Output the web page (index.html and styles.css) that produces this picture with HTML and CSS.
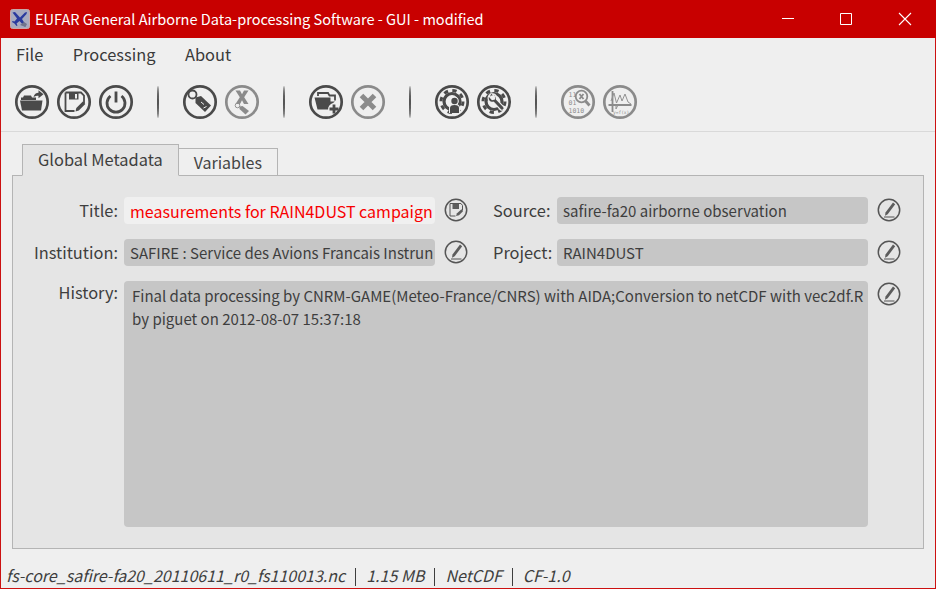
FILE: index.html
```html
<!DOCTYPE html>
<html lang="en">
<head>
<meta charset="utf-8">
<title>EUFAR General Airborne Data-processing Software - GUI - modified</title>
<link rel="stylesheet" href="styles.css">
</head>
<body>
<svg class="defs" width="0" height="0" aria-hidden="true">
  <defs>
    <symbol id="i-open" viewBox="0 0 36 36">
      <circle cx="18" cy="18" r="15.700" class="ring"/>
      <path class="fill" d="M7 13.500h2l1-2h7l1 2h4v2.500H7z"/>
      <path class="fill" d="M6 16.500h22.500l-1.500 10h-19z"/>
      <path class="fill" d="M19.500 13c.5-2.800 2.800-4.300 5-4.300V6.200l5 4-5 4v-2.500c-1.800 0-3.500.4-5 1.300z"/>
    </symbol>
    <symbol id="i-save" viewBox="0 0 36 36">
      <circle cx="18" cy="18" r="15.700" class="ring"/>
      <path class="line" d="M9.500 8.500h15.500l3 3v8M9.500 8.500v18.500h9"/>
      <path class="fill" d="M13 9h9.500v6.500H13z"/>
      <path class="cut" d="M19 10h2v4.500h-2z"/>
      <path class="fill" d="M19.500 27.500l.8-3.500 6.500-6.500 2.500 2.500-6.500 6.500z"/>
    </symbol>
    <symbol id="i-power" viewBox="0 0 36 36">
      <circle cx="18" cy="18" r="15.700" class="ring"/>
      <path class="thick" d="M12.500 12a9 9 0 1 0 11 0"/>
      <path class="thick" d="M18 7.500v11"/>
    </symbol>
    <symbol id="i-tag" viewBox="0 0 36 36">
      <circle cx="18" cy="18" r="15.700" class="ring"/>
      <circle cx="10.500" cy="10.500" r="4" class="line"/>
      <path class="fill" d="M13.500 13.500l5.500-1.500 10 9.500-6 6.500-9.500-9z"/>
      <path class="cut-line" d="M19 18l3 2.500M21.500 24l3-1.500"/>
    </symbol>
    <symbol id="i-untag" viewBox="0 0 36 36">
      <circle cx="18" cy="18" r="15.700" class="ring"/>
      <path class="fill" d="M11.500 6.500h4.500l2 3.800 2-3.800h4.500l-4.300 6.700 4.300 6.800H20l-2-3.800-2 3.800h-4.500l4.300-6.800z"/>
      <circle cx="13.500" cy="21.500" r="2.300" class="thin"/>
      <path class="fill" d="M15.500 22.500l3-.5 6.500 5-3.500 3.500-6-5.500z"/>
    </symbol>
    <symbol id="i-add" viewBox="0 0 36 36">
      <circle cx="18" cy="18" r="15.700" class="ring"/>
      <path class="line" d="M10 12V9h10l1.500 2.500h5.500v5"/>
      <path class="fill" d="M6.500 13.500h16v4H27l-2 1.500c-3 1-5 3.500-5 6.500H9.500z"/>
      <path class="thick" d="M26 20.500v9M21.500 25h9"/>
    </symbol>
    <symbol id="i-cancel" viewBox="0 0 36 36">
      <circle cx="18" cy="18" r="15.700" class="ring"/>
      <path class="heavy" d="M11.500 11.500l13 13M24.500 11.500l-13 13"/>
    </symbol>
    <symbol id="i-gear-user" viewBox="0 0 36 36">
      <circle cx="18" cy="18" r="15.700" class="ring"/>
      <circle cx="18" cy="17.500" r="8" class="gear-body"/>
      <circle cx="18" cy="17.500" r="11" class="gear-teeth"/>
      <path class="halo" d="M15 29v-5c0-2.500 2-3.500 2.800-3.700a4.300 4.300 0 1 1 5.400 0c.8.200 2.800 1.200 2.800 3.700v5z"/>
      <circle cx="20.500" cy="17" r="3.200" class="fill"/>
      <path class="fill" d="M16 29v-5c0-2 1.500-3 4.500-3s4.500 1 4.500 3v5z"/>
    </symbol>
    <symbol id="i-gear-tool" viewBox="0 0 36 36">
      <circle cx="18" cy="18" r="15.700" class="ring"/>
      <circle cx="18" cy="17.500" r="8" class="gear-body"/>
      <circle cx="18" cy="17.500" r="11" class="gear-teeth"/>
      <path class="tool" d="M14.500 10a4.800 4.800 0 0 0-1.500 7c1.200 1.400 3 1.700 4.500 1.200l6.800 7.300c.8.900 2.400 1 3.200.2.800-.8.800-2.300 0-3.100l-7-7.200c.4-1.700 0-3.400-1.300-4.600-1-.9-2-1.200-3-1l2.800 2.900-.5 2.300-2.300.5-2.800-2.900z"/>
    </symbol>
    <symbol id="i-bin" viewBox="0 0 36 36">
      <circle cx="18" cy="18" r="15.700" class="ring"/>
      <text x="8.500" y="13" class="bin">11</text>
      <text x="8.500" y="21" class="bin">01</text>
      <text x="8.500" y="29" class="bin">1010</text>
      <circle cx="21.500" cy="12.500" r="5.800" class="line"/>
      <path class="thick" d="M25.500 17l4 4.500"/>
      <path class="line" d="M19.500 10l4 5M23.500 10l-4 5"/>
    </symbol>
    <symbol id="i-plot" viewBox="0 0 36 36">
      <circle cx="18" cy="18" r="15.700" class="ring"/>
      <path class="line" d="M10.500 7v21M6.500 21h23"/>
      <path class="thin" d="M9 17l3-8 2.500 10 3.500-8 2 6 3-7 3 8 3 2M14 21v4l2-4"/>
      <text x="11" y="30" class="bin small">y=f(x)</text>
    </symbol>
    <symbol id="i-edit" viewBox="0 0 24 24">
      <circle cx="12" cy="12" r="10.700" class="ring-small"/>
      <path class="pen" d="M8.500 14.500l7.500-10 2.200 1.700-7.500 10-2.700 1.500z"/>
      <path class="thin" d="M7 19h10.500"/>
    </symbol>
    <symbol id="i-save-small" viewBox="0 0 24 24">
      <circle cx="12" cy="12" r="10.700" class="ring-small"/>
      <path class="thin" d="M6 5.500h11l1.500 2v5M6 5.500v12.500h5.500"/>
      <path class="pen" d="M8.500 6h6.500v5H8.500z"/>
      <path class="pen" d="M12 18l1-2.800 4.500-4 1.500 2-4 4z"/>
    </symbol>
  </defs>
</svg>

<div class="window">
  <header class="titlebar">
    <svg class="appicon" viewBox="0 0 20 20" aria-hidden="true">
      <rect x=".5" y=".5" width="19" height="19" rx="2" fill="#a8abc0" stroke="#c9a8a8"/>
      <path d="M2.500 3.500l2.500-.5 5 5.500 5-5 2-.5-.5 2-4.500 5 4 6.500-1.500 1-5-5.500-3 2.500 1 2-1 .5-2-2.500-2.500-1.500.5-1 2 .5 2.500-3z" fill="#2a3a9e"/>
      <path d="M10 16l4-3 3 2-1.500 3z" fill="#70748c"/>
    </svg>
    <span class="titletext">EUFAR General Airborne Data-processing Software - GUI - modified</span>
    <div class="winbtns">
      <svg class="winbtn" viewBox="0 0 46 38" aria-hidden="true"><path d="M16 18.500h12" stroke="#fff"/></svg>
      <svg class="winbtn" viewBox="0 0 46 38" aria-hidden="true"><path d="M18.500 13.500h11v11h-11z" fill="none" stroke="#fff"/></svg>
      <svg class="winbtn" viewBox="0 0 46 38" aria-hidden="true"><path d="M19 13l12 12M31 13L19 25" stroke="#fff" stroke-width="1.100"/></svg>
    </div>
  </header>

  <nav class="menubar">
    <span class="menuitem">File</span>
    <span class="menuitem">Processing</span>
    <span class="menuitem">About</span>
  </nav>

  <div class="toolbar">
    <svg class="tool-icon"><use href="#i-open"/></svg>
    <svg class="tool-icon"><use href="#i-save"/></svg>
    <svg class="tool-icon"><use href="#i-power"/></svg>
    <span class="toolsep"></span>
    <svg class="tool-icon"><use href="#i-tag"/></svg>
    <svg class="tool-icon off"><use href="#i-untag"/></svg>
    <span class="toolsep"></span>
    <svg class="tool-icon"><use href="#i-add"/></svg>
    <svg class="tool-icon off"><use href="#i-cancel"/></svg>
    <span class="toolsep"></span>
    <svg class="tool-icon"><use href="#i-gear-user"/></svg>
    <svg class="tool-icon"><use href="#i-gear-tool"/></svg>
    <span class="toolsep"></span>
    <svg class="tool-icon off"><use href="#i-bin"/></svg>
    <svg class="tool-icon off"><use href="#i-plot"/></svg>
  </div>

  <main class="content">
    <div class="tabs">
      <span class="tab active">Global Metadata</span>
      <span class="tab">Variables</span>
    </div>
    <section class="panel">
      <div class="form">
        <label class="label">Title:</label>
        <div class="field modified">measurements for RAIN4DUST campaign</div>
        <svg class="field-icon"><use href="#i-save-small"/></svg>
        <label class="label second">Source:</label>
        <div class="field">safire-fa20 airborne observation</div>
        <svg class="field-icon"><use href="#i-edit"/></svg>

        <label class="label">Institution:</label>
        <div class="field">SAFIRE : Service des Avions Francais Instrun</div>
        <svg class="field-icon"><use href="#i-edit"/></svg>
        <label class="label second">Project:</label>
        <div class="field">RAIN4DUST</div>
        <svg class="field-icon"><use href="#i-edit"/></svg>

        <label class="label top">History:</label>
        <div class="field history">Final data processing by CNRM-GAME(Meteo-France/CNRS) with AIDA;Conversion to netCDF with vec2df.R by piguet on 2012-08-07 15:37:18</div>
        <svg class="field-icon"><use href="#i-edit"/></svg>
      </div>
    </section>
  </main>

  <footer class="statusbar">
    <span>fs-core_safire-fa20_20110611_r0_fs110013.nc</span>
    <i class="bar"></i>
    <span>1.15 MB</span>
    <i class="bar"></i>
    <span>NetCDF</span>
    <i class="bar"></i>
    <span>CF-1.0</span>
  </footer>
</div>
</body>
</html>
```
FILE: styles.css
```css
* { box-sizing: border-box; }
html, body { margin: 0; padding: 0; }
body {
  width: 936px;
  height: 589px;
  overflow: hidden;
  font-family: "Noto Sans CJK SC", "Noto Sans", sans-serif;
  color: #3e3e3e;
  background: #efefef;
}
.defs { display: block; height: 0; }

.window {
  width: 936px;
  height: 589px;
  display: flex;
  flex-direction: column;
  border: 1px solid #cc1111;
  border-top: 0;
  background: #efefef;
}

.titlebar {
  flex: none;
  height: 38px;
  margin: 0 -1px;
  padding-left: 10px;
  display: flex;
  align-items: center;
  background: #c80000;
  color: #fff;
}
.appicon { width: 20px; height: 20px; flex: none; margin-top: -1px; }
.titletext { margin-left: 5px; font-size: 14.560px; line-height: 20px; flex: 1; }
.winbtns { display: flex; }
.winbtn { width: 46px; height: 38px; display: block; }
.winbtn:first-child { margin-right: 10px; }
.winbtn:last-child { margin-left: 12px; margin-right: 10px; }

.menubar {
  flex: none;
  height: 34px;
  padding: 0 0 2px 15px;
  display: flex;
  align-items: center;
  gap: 29.500px;
  font-size: 16.400px;
  color: #3a3a3a;
}

.toolbar {
  flex: none;
  height: 60px;
  padding: 3px 0 0 13px;
  display: flex;
  align-items: flex-start;
  gap: 6px;
  border-bottom: 1px solid #d9d9d9;
}
.tool-icon { width: 36px; height: 36px; flex: none; display: block; margin-top: 9px; }
.toolsep {
  flex: none;
  width: 2px;
  height: 32px;
  margin: 11px 17px 0;
  border-radius: 50%;
  background: #555;
}

/* Icon drawing classes */
.ring { fill: none; stroke: #4a4a4a; stroke-width: 2.700; }
.ring-small { fill: none; stroke: #555; stroke-width: 1.500; }
.fill { fill: #4a4a4a; }
.pen { fill: #5c5c5c; }
.line { fill: none; stroke: #4a4a4a; stroke-width: 1.800; }
.thin { fill: none; stroke: #555; stroke-width: 1; }
.thick { fill: none; stroke: #4a4a4a; stroke-width: 2.800; }
.heavy { fill: none; stroke: #4a4a4a; stroke-width: 5; }
.cut { fill: #efefef; }
.cut-line { fill: none; stroke: #efefef; stroke-width: 1; }
.halo { fill: #efefef; }
.tool { fill: #4a4a4a; stroke: #efefef; stroke-width: 1.200; }
.gear-body { fill: none; stroke: #4a4a4a; stroke-width: 3.200; }
.gear-teeth { fill: none; stroke: #4a4a4a; stroke-width: 3; stroke-dasharray: 4.300 4.340; }
.bin { font-family: "DejaVu Sans Mono", monospace; font-size: 6.500px; fill: #4a4a4a; }
.bin.small { font-size: 4.500px; }
.tool-icon.off { opacity: .6; }

.content {
  flex: 1;
  min-height: 0;
  padding: 12px 11px 0 11px;
  display: flex;
  flex-direction: column;
}

.tabs {
  flex: none;
  height: 32px;
  padding-left: 10px;
  display: flex;
  align-items: flex-end;
  margin-bottom: -1px;
  position: relative;
  z-index: 1;
}
.tab {
  height: 28px;
  padding: 0 15px;
  display: flex;
  align-items: center;
  background: #efefef;
  border: 1px solid #b4b4b4;
  border-left: 0;
  font-size: 16px;
  color: #444;
}
.tab.active {
  height: 32px;
  background: #e5e5e5;
  border-left: 1px solid #b4b4b4;
  border-bottom-color: #e5e5e5;
  color: #3e3e3e;
  font-size: 16.400px;
  padding-bottom: 2px;
}

.panel {
  flex: none;
  height: 374px;
  background: #e5e5e5;
  border: 1px solid #b4b4b4;
  padding-top: 21px;
}

.form {
  display: grid;
  grid-template-columns: 111px 311px 58px 64px 311px 33px;
  grid-template-rows: 27px 27px 246px;
  row-gap: 15px;
}
.label {
  text-align: right;
  padding-right: 6px;
  font-size: 16.400px;
  line-height: 27px;
  color: #3e3e3e;
}
.label.second { padding-right: 7px; }
.label.top { line-height: 23px; }
.field {
  background: #c6c6c6;
  border-radius: 4px;
  padding: 0 6px;
  font-size: 15px;
  line-height: 27px;
  white-space: nowrap;
  overflow: hidden;
  color: #3e3e3e;
}
.field.modified { background: #f0f0f0; color: #f80000; font-size: 16px; padding-top: 1px; }
.field.history {
  grid-column: 2 / 6;
  white-space: normal;
  line-height: 22.500px;
  padding: 4px 0 0 8px;
}
.field-icon {
  width: 24px;
  height: 24px;
  display: block;
  margin: 1px 0 0 9px;
}

.statusbar {
  flex: none;
  height: 39px;
  padding: 13px 0 0 5px;
  display: flex;
  align-items: center;
  font-size: 16px;
  font-style: italic;
  color: #3e3e3e;
}
.bar {
  width: 1px;
  height: 18px;
  margin: 4px 10px 0;
  background: #3e3e3e;
}
```
